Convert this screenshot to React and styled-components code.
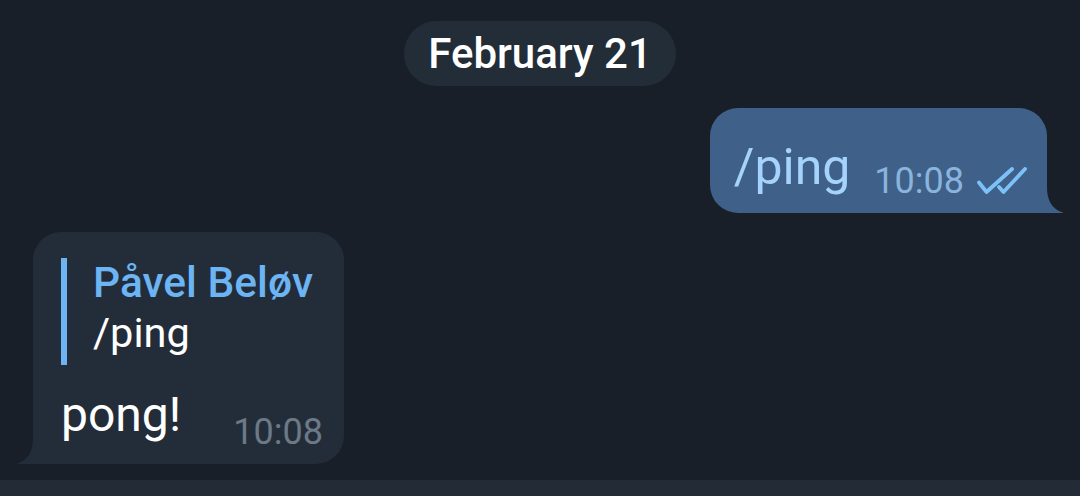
import React from "react";
import styled, { createGlobalStyle } from "styled-components";

const Global = createGlobalStyle`
  html, body {
    margin: 0;
    padding: 0;
    background: #181f28;
  }
  body {
    font-family: Roboto, "Noto Sans", "Liberation Sans", sans-serif;
  }
`;

const Screen = styled.div`
  width: 1080px;
  height: 496px;
  background: #181f28;
  display: flex;
  flex-direction: column;
  overflow: hidden;
`;

const Chat = styled.div`
  flex: 1;
  display: flex;
  flex-direction: column;
  padding: 21px 33px 0;
`;

const DateRow = styled.div`
  display: flex;
  justify-content: center;
`;

const DatePill = styled.div`
  height: 65px;
  padding: 0 24px;
  border-radius: 33px;
  background: #232d38;
  color: #ffffff;
  font-size: 42px;
  font-weight: 500;
  display: flex;
  align-items: center;
`;

const Row = styled.div`
  display: flex;
  justify-content: ${(p) => (p.$out ? "flex-end" : "flex-start")};
  margin-top: ${(p) => p.$top}px;
`;

const Bubble = styled.div`
  position: relative;
  background: ${(p) => (p.$out ? "#3e6089" : "#232d39")};
  border-radius: ${(p) => (p.$out ? "28px 28px 0 28px" : "28px 28px 28px 0")};
  padding: ${(p) => p.$pad};
  display: flex;
  flex-direction: column;
`;

const Tail = styled.svg`
  position: absolute;
  bottom: 0;
  ${(p) => (p.$out ? "right: -16px;" : "left: -16px;")}
  width: 16px;
  height: 26px;
  display: block;
`;

const Footer = styled.div`
  display: flex;
  align-items: flex-end;
  justify-content: space-between;
`;

const Text = styled.div`
  font-size: ${(p) => p.$size}px;
  line-height: 56px;
  color: ${(p) => (p.$out ? "#a6d3fb" : "#ffffff")};
  margin-bottom: ${(p) => p.$drop}px;
  white-space: nowrap;
`;

const Meta = styled.div`
  display: flex;
  align-items: center;
  gap: 13px;
  margin-left: ${(p) => p.$gap}px;
  font-size: 36px;
  line-height: 40px;
  color: ${(p) => (p.$out ? "#8ab4dc" : "#6c7986")};
`;

const Quote = styled.div`
  border-left: 6px solid #6cb4f3;
  padding: 0 10px 7px 26px;
  margin-bottom: 22px;
`;

const QuoteName = styled.div`
  font-size: 42.5px;
  line-height: 50px;
  font-weight: 500;
  color: #6cb4f3;
  white-space: nowrap;
`;

const QuoteText = styled.div`
  font-size: 41.5px;
  line-height: 50px;
  color: #ffffff;
`;

const BottomBar = styled.div`
  height: 16px;
  background: #222b36;
`;

const Ticks = () => (
  <svg width="50" height="28" viewBox="0 0 50 28" fill="none">
    <path
      d="M2 15.5 L9.5 25 L35 2"
      stroke="#7cc2f8"
      strokeWidth="3.8"
      strokeLinecap="round"
      strokeLinejoin="round"
    />
    <path
      d="M22 20 L26.5 25 L48 2"
      stroke="#7cc2f8"
      strokeWidth="3.8"
      strokeLinecap="round"
      strokeLinejoin="round"
    />
  </svg>
);

const TailShape = ({ out, color }) => (
  <Tail $out={out} viewBox="0 0 16 26">
    {out ? (
      <path d="M0 0 C0 12 4 22 16 25.5 L16 26 L0 26 Z" fill={color} />
    ) : (
      <path d="M16 0 C16 12 12 22 0 25.5 L0 26 L16 26 Z" fill={color} />
    )}
  </Tail>
);

export default function App() {
  return (
    <Screen>
      <Global />
      <Chat>
        <DateRow>
          <DatePill>February 21</DatePill>
        </DateRow>

        <Row $out $top={22}>
          <Bubble $out $pad="31px 20px 12px 24px">
            <Footer>
              <Text $out $size={50} $drop={6}>/ping</Text>
              <Meta $out $gap={24}>
                10:08
                <Ticks />
              </Meta>
            </Footer>
            <TailShape out color="#3e6089" />
          </Bubble>
        </Row>

        <Row $top={19}>
          <Bubble $pad="26px 21px 12px 28px">
            <Quote>
              <QuoteName>Påvel Beløv</QuoteName>
              <QuoteText>/ping</QuoteText>
            </Quote>
            <Footer>
              <Text $size={48} $drop={9}>pong!</Text>
              <Meta $gap={40}>10:08</Meta>
            </Footer>
            <TailShape color="#232d39" />
          </Bubble>
        </Row>
      </Chat>
      <BottomBar />
    </Screen>
  );
}
